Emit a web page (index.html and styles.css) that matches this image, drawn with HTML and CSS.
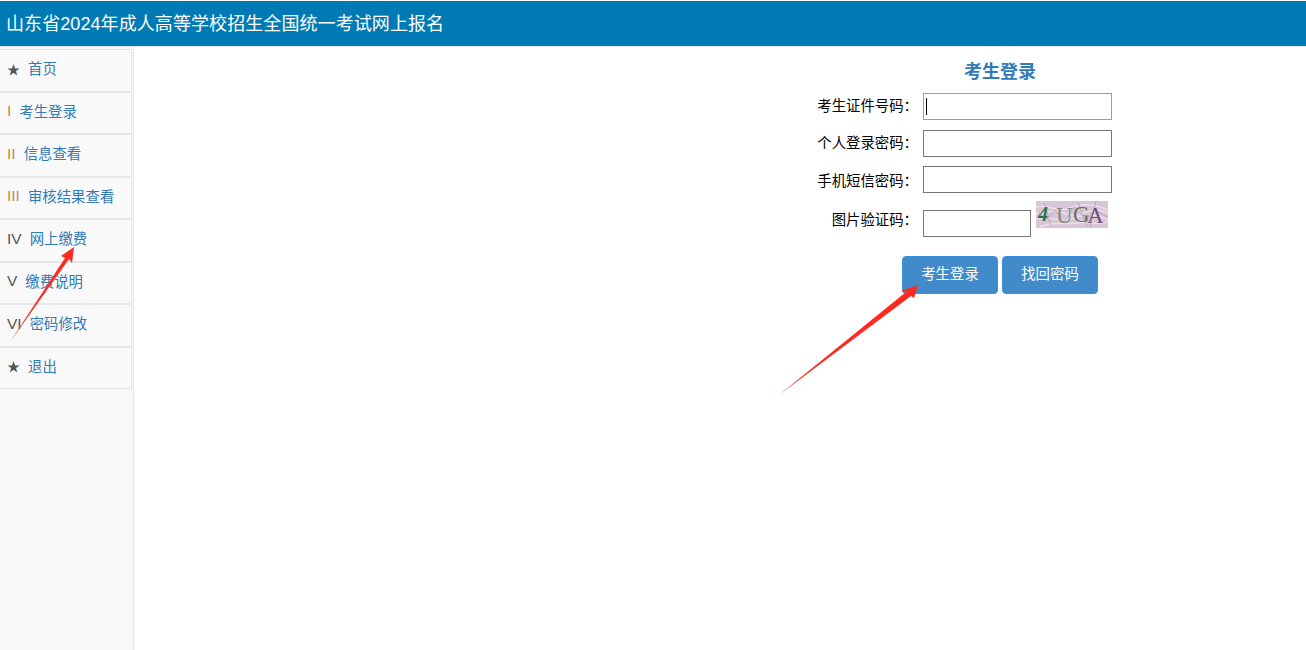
FILE: index.html
```html
<!DOCTYPE html>
<html lang="zh-CN">
<head>
<meta charset="utf-8">
<title>山东省2024年成人高等学校招生全国统一考试网上报名</title>
<link rel="stylesheet" href="styles.css">
</head>
<body>
<header class="topbar"><h1 class="site-title">山东省2024年成人高等学校招生全国统一考试网上报名</h1></header>
<div class="layout">
  <nav class="sidebar">
    <a class="nav-item"><span class="mark mark-star">★</span><span class="nav-text nav-star">首页</span></a>
    <a class="nav-item"><span class="mark mark-orange">I</span><span class="nav-text">考生登录</span></a>
    <a class="nav-item"><span class="mark mark-orange">II</span><span class="nav-text">信息查看</span></a>
    <a class="nav-item"><span class="mark mark-orange">III</span><span class="nav-text">审核结果查看</span></a>
    <a class="nav-item"><span class="mark">IV</span><span class="nav-text">网上缴费</span></a>
    <a class="nav-item"><span class="mark">V</span><span class="nav-text">缴费说明</span></a>
    <a class="nav-item"><span class="mark">VI</span><span class="nav-text">密码修改</span></a>
    <a class="nav-item"><span class="mark mark-star">★</span><span class="nav-text nav-star">退出</span></a>
  </nav>
  <main class="content">
    <form class="login">
      <h2 class="login-title">考生登录</h2>
      <div class="row row-first"><label class="label">考生证件号码：</label><div class="fake-input focused"><span class="caret"></span></div></div>
      <div class="row"><label class="label">个人登录密码：</label><div class="fake-input"></div></div>
      <div class="row row-third"><label class="label">手机短信密码：</label><div class="fake-input"></div></div>
      <div class="row row-captcha">
        <label class="label">图片验证码：</label>
        <div class="fake-input short"></div>
        <svg class="captcha" width="72" height="27" viewBox="0 0 72 27">
          <rect width="72" height="27" fill="#d8c5d6"/>
          <path d="M0 6C12 2 20 12 34 7S58 3 72 9M0 18c10-5 22 4 34 0s24-6 38 1M4 26C16 20 26 24 40 22s20 3 32-1M0 12c8 3 14-4 24-1s14 5 24 1 16-3 24 0" fill="none" stroke="#ebe0ea" stroke-width="1.5"/>
          <path d="M2 12l9 6 8-9 9 12 10-15 12 13 9-10 12 7M8 2l7 22M42 1l9 24M60 0l-6 26" fill="none" stroke="#bda5bb" stroke-width="1"/>
          <text class="cap-g" x="2" y="20">4</text>
          <text class="cap-a" x="20" y="22">U</text>
          <text class="cap-b" x="37" y="21">G</text>
          <text class="cap-c" x="51" y="22">A</text>
        </svg>
      </div>
      <div class="actions">
        <button type="button" class="btn">考生登录</button>
        <button type="button" class="btn">找回密码</button>
      </div>
    </form>
  </main>
</div>
<svg class="arrows" width="1306" height="650" viewBox="0 0 1306 650">
  <path d="M10 342L65 258 61 256 74 247 72 263 69 259Z" fill="#fd2a1f"/>
  <path d="M779 395L906 292 901 291 918 285 914 298 911 296Z" fill="#fd2a1f"/>
</svg>
</body>
</html>
```
FILE: styles.css
```css
* { box-sizing: border-box; }
html, body { height: 100%; }
body {
  margin: 0;
  padding-top: 1px;
  background: #fff;
  color: #000;
  font-family: "Liberation Sans", "Noto Sans CJK SC", sans-serif;
  font-size: 14.4px;
  overflow: hidden;
}
.topbar {
  height: 45px;
  background: #007ab5;
  display: flex;
  align-items: center;
  padding: 0 0 4px 6px;
}
.site-title {
  margin: 0;
  color: #fff;
  font-size: 18px;
  font-weight: 400;
  letter-spacing: 0.08px;
}
.layout {
  display: flex;
  height: 604px;
  border-top: 1px solid #e7e7e7;
}
.sidebar {
  width: 134px;
  flex: none;
  background: #f8f8f8;
  border-right: 1px solid #e7e7e7;
  padding: 2px 1px 0 0;
  display: flex;
  flex-direction: column;
}
.nav-item {
  height: 42.5px;
  flex: none;
  border: 1px solid #e7e7e7;
  border-width: 1px 1px 1px 0;
  display: flex;
  align-items: center;
  padding: 0 0 5px 7px;
  gap: 8px;
  color: #337ab7;
  background: #f9f9f9;
}
.mark { color: #555; font-size: 15.5px; padding-top: 2px; }
.mark-orange { color: #bd8a4b; }
.mark-star { font-size: 13px; width: 12px; margin-right: 1px; padding-top: 1px; color: #555; }
.nav-text { color: #337ab7; }
.content { flex: 1; }
.login {
  width: 320px;
  margin-left: 666px;
  padding-top: 14px;
}
.login-title {
  margin: 0;
  height: 22px;
  line-height: 22px;
  padding-left: 164px;
  font-size: 18px;
  color: #337ab7;
}
.row {
  display: flex;
  align-items: center;
  height: 27px;
  margin-top: 10px;
}
.row-first { margin-top: 10px; }
.row-third { margin-top: 9px; }
.row-captcha {
  margin-top: 8px;
  height: 36px;
  align-items: flex-start;
}
.label {
  width: 118px;
  margin-right: 5px;
  padding-bottom: 4px;
  text-align: right;
  white-space: nowrap;
  flex: none;
}
.row-third .label { padding-bottom: 0; }
.row-captcha .label { padding-top: 7px; padding-bottom: 0; }
.fake-input {
  width: 189px;
  height: 27px;
  border: 1px solid #767676;
  background: #fff;
  display: flex;
  align-items: center;
  padding-left: 2px;
}
.focused { border-color: #c9964f; }
.caret { width: 1px; height: 17px; background: #000; }
.short { width: 108px; margin-top: 9px; }
.captcha { margin-left: 5px; flex: none; }
.captcha text { font-family: "Liberation Serif", serif; font-size: 23px; }
.captcha .cap-g { fill: #2f7150; font-size: 20px; font-style: italic; font-weight: 700; }
.captcha .cap-a { fill: #868c7c; }
.captcha .cap-b { fill: #6a7062; }
.captcha .cap-c { fill: #6f4f76; }
.actions {
  display: flex;
  gap: 4px;
  margin-top: 19px;
  margin-left: 102px;
}
.btn {
  width: 96px;
  height: 38px;
  border: 1px solid #3d8fe0;
  border-radius: 4px;
  background: #428bca;
  color: #fff;
  font: inherit;
  padding: 0 0 5px;
}
.arrows {
  position: absolute;
  left: 0;
  top: 0;
  pointer-events: none;
}
```
